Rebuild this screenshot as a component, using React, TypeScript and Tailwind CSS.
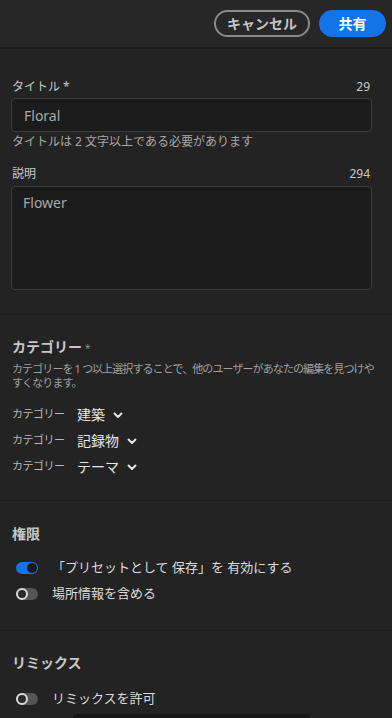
import React from 'react';

const font = { fontFamily: '"Noto Sans", "Noto Sans CJK JP", sans-serif' };

function Chevron() {
  return (
    <svg width="10" height="10" viewBox="0 0 10 10" className="ml-2 mt-[2px]">
      <path d="M1.5 3.5 L5 7 L8.5 3.5" fill="none" stroke="#e6e6e6" strokeWidth="2" strokeLinecap="round" strokeLinejoin="round" />
    </svg>
  );
}

function Toggle({ on }: { on: boolean }) {
  return (
    <span
      className={`relative inline-flex h-[12px] w-[22px] shrink-0 items-center rounded-full ${
        on ? 'bg-[#1473e6]' : 'bg-[#555555]'
      }`}
    >
      <span
        className={`absolute h-[10px] w-[10px] rounded-full ${
          on ? 'left-[11px] bg-[#1b1b1b]' : 'left-0 h-[12px] w-[12px] border-2 border-[#d8d8d8] bg-[#2b2b2b]'
        }`}
      />
    </span>
  );
}

function Divider() {
  return <div className="h-[2px] border-t border-[#1b1b1b] bg-[#262626]" />;
}

export default function App() {
  const categories = [
    { label: 'カテゴリー', value: '建築' },
    { label: 'カテゴリー', value: '記録物' },
    { label: 'カテゴリー', value: 'テーマ' },
  ];

  return (
    <div className="h-[718px] w-[392px] overflow-hidden bg-[#232323] text-[#c8c8c8]" style={font}>
      {/* header */}
      <div className="flex h-[47px] items-center justify-end gap-[9px] bg-[#272727] pr-[6px]">
        <button className="h-[27px] w-[96px] rounded-full border-2 border-[#8a8a8a] text-[14px] font-bold text-[#c4c4c4]">
          キャンセル
        </button>
        <button className="h-[27px] w-[67px] rounded-full bg-[#1473e6] text-[14px] font-bold text-white">
          共有
        </button>
      </div>
      <div className="h-[2px] bg-[#1a1a1a]" />

      {/* title / description */}
      <div className="pl-[11px] pr-[20px] pt-[30px] pb-[24px]">
        <div className="flex items-center justify-between pl-[1px] pr-[2px] text-[12px] leading-[16px]">
          <span>タイトル *</span>
          <span>29</span>
        </div>
        <div className="mt-[3px] flex h-[34px] items-center rounded-[4px] border border-[#3c3c3c] bg-[#1b1b1b] px-[12px] text-[14px] text-[#a8a8a8]">
          Floral
        </div>
        <div className="mt-[3px] pl-[1px] text-[12px] leading-[14px] text-[#a8a8a8]">
          タイトルは 2 文字以上である必要があります
        </div>

        <div className="mt-[17px] flex items-center justify-between pl-[1px] pr-[2px] text-[12px] leading-[16px]">
          <span>説明</span>
          <span>294</span>
        </div>
        <div className="mt-[4px] h-[104px] rounded-[4px] border border-[#3c3c3c] bg-[#1b1b1b] px-[11px] pt-[5px] text-[14px] text-[#a8a8a8]">
          Flower
        </div>
      </div>
      <Divider />

      {/* categories */}
      <div className="px-[12px] pt-[21px] pb-[24px]">
        <div className="flex items-baseline text-[14px] font-bold leading-[20px] text-[#c8c8c8]">
          カテゴリー<span className="ml-[3px] text-[10px] font-normal text-[#8a8a8a]">*</span>
        </div>
        <div className="mt-[4px] text-[11px] leading-[14px] tracking-[-0.9px] text-[#a0a0a0]">
          <span className="whitespace-nowrap">カテゴリーを 1 つ以上選択することで、他のユーザーがあなたの編集を見つけや</span>
          <br />
          すくなります。
        </div>
        <div className="mt-[14px] flex flex-col gap-[6px]">
          {categories.map((c, i) => (
            <div key={i} className="flex h-[20px] items-center">
              <span className="w-[65px] text-[11px] tracking-[-0.5px] text-[#b8b8b8]">{c.label}</span>
              <span className="flex items-center text-[14px] text-[#e6e6e6]">
                {c.value}
                <Chevron />
              </span>
            </div>
          ))}
        </div>
      </div>
      <Divider />

      {/* permissions */}
      <div className="px-[12px] pt-[22px] pb-[26px]">
        <div className="text-[14px] font-bold leading-[20px] text-[#c8c8c8]">権限</div>
        <div className="mt-[14px] flex flex-col gap-[6px] pl-[4px]">
          <div className="flex h-[20px] items-center gap-[14px] text-[13px] text-[#dcdcdc]">
            <Toggle on />
            <span>「プリセットとして 保存」を 有効にする</span>
          </div>
          <div className="flex h-[20px] items-center gap-[14px] text-[13px] text-[#dcdcdc]">
            <Toggle on={false} />
            <span>場所情報を含める</span>
          </div>
        </div>
      </div>
      <Divider />

      {/* remix */}
      <div className="px-[12px] pt-[21px]">
        <div className="text-[14px] font-bold leading-[20px] text-[#c8c8c8]">リミックス</div>
        <div className="mt-[16px] flex h-[20px] items-center gap-[14px] pl-[4px] text-[13px] text-[#dcdcdc]">
          <Toggle on={false} />
          <span>リミックスを許可</span>
        </div>
        <div className="mt-[5px] ml-[61px] h-[4px] w-[237px] rounded-t-[3px] bg-[#161616]" />
      </div>
    </div>
  );
}
